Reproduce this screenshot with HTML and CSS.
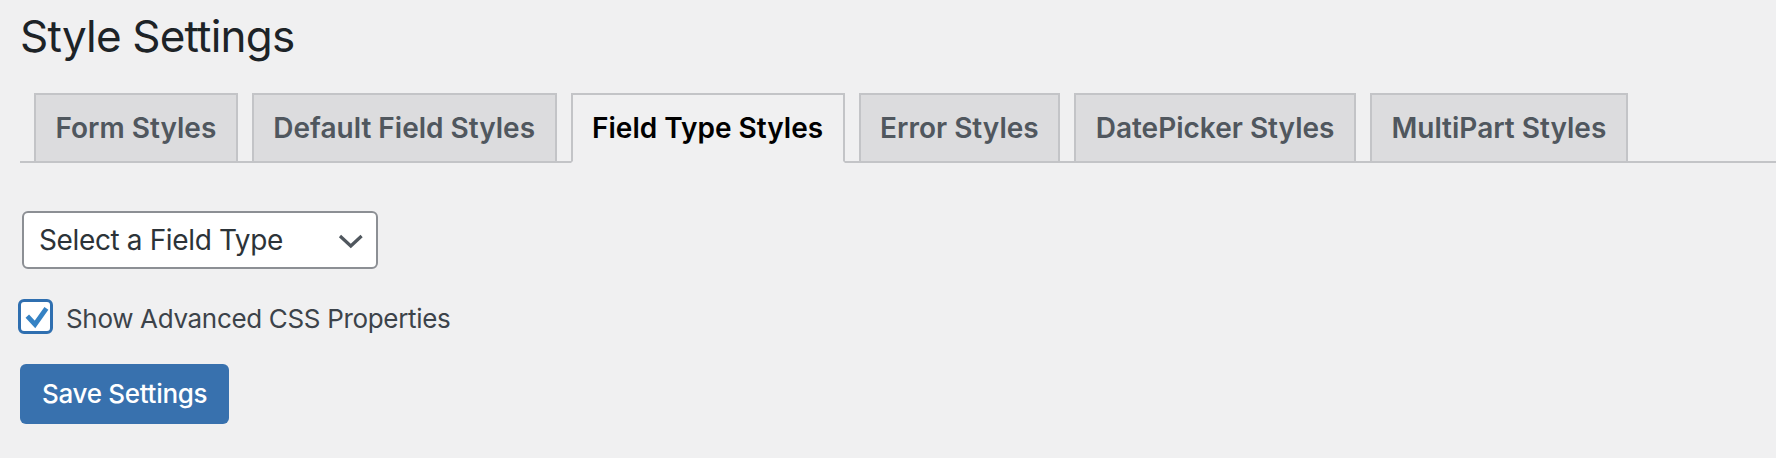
FILE: index.html
```html
<!DOCTYPE html>
<html lang="en">
<head>
<meta charset="utf-8">
<title>Style Settings</title>
<link rel="stylesheet" href="styles.css">
</head>
<body>
<div class="wrap">
  <h1 class="page-title">Style Settings</h1>
  <nav class="nav-tab-wrapper">
    <a class="nav-tab" href="#">Form Styles</a>
    <a class="nav-tab" href="#">Default Field Styles</a>
    <a class="nav-tab nav-tab-active" href="#">Field Type Styles</a>
    <a class="nav-tab" href="#">Error Styles</a>
    <a class="nav-tab" href="#">DatePicker Styles</a>
    <a class="nav-tab" href="#">MultiPart Styles</a>
  </nav>
  <form class="settings-form">
    <div class="select-wrap">
      <select class="field-select">
        <option>Select a Field Type</option>
      </select>
      <svg class="chevron" width="26" height="15" viewBox="0 0 26 15" aria-hidden="true">
        <path d="M2 2 L12.8 12 L23.6 2" fill="none" stroke="#50575e" stroke-width="3.2" stroke-linejoin="miter"/>
      </svg>
    </div>
    <label class="adv-toggle">
      <span class="checkbox">
        <svg width="29" height="29" viewBox="0 0 29 29" aria-hidden="true">
          <path d="M6.3 14.2 L14 22.4 L25.4 6.4" fill="none" stroke="#3582c4" stroke-width="4.8" stroke-linejoin="miter"/>
        </svg>
      </span>
      <span class="label-text">Show Advanced CSS Properties</span>
    </label>
    <button type="button" class="button-primary">Save Settings</button>
  </form>
</div>
</body>
</html>
```
FILE: styles.css
```css
html, body {
  margin: 0;
  padding: 0;
  background: #f0f0f1;
}

body {
  font-family: Inter, "Liberation Sans", sans-serif;
  color: #3c434a;
}

.wrap {
  padding-left: 20px;
}

.page-title {
  margin: 0;
  padding-top: 6px;
  font-size: 44px;
  line-height: 60px;
  font-weight: 400;
  letter-spacing: -0.8px;
  color: #1d2327;
}

.nav-tab-wrapper {
  margin-top: 27px;
  display: flex;
  align-items: flex-end;
  border-bottom: 2px solid #c3c4c7;
}

.nav-tab {
  display: block;
  margin-left: 14px;
  margin-bottom: -2px;
  padding: 10px 19.5px;
  border: 2px solid #c3c4c7;
  background: #dcdcde;
  color: #50575e;
  font-size: 28px;
  line-height: 46px;
  font-weight: 600;
  text-decoration: none;
  white-space: nowrap;
}

.nav-tab-active {
  background: #f0f0f1;
  color: #000;
  border-bottom-color: #f0f0f1;
}

.settings-form {
  padding-top: 48px;
  display: flex;
  flex-direction: column;
  align-items: flex-start;
}

.select-wrap {
  position: relative;
  margin-left: 2px;
}

.field-select {
  display: block;
  box-sizing: border-box;
  width: 356px;
  height: 58px;
  margin: 0;
  padding: 0 40px 0 15px;
  border: 2px solid #8c8f94;
  border-radius: 6px;
  background: #fff;
  color: #2c3338;
  font-family: Inter, "Liberation Sans", sans-serif;
  font-size: 28px;
  letter-spacing: -0.37px;
  -webkit-appearance: none;
  appearance: none;
  outline: none;
}

.chevron {
  position: absolute;
  left: 316px;
  top: 23px;
  pointer-events: none;
}

.adv-toggle {
  margin-top: 30px;
  margin-left: -2px;
  display: flex;
  align-items: center;
  height: 35px;
}

.checkbox {
  box-sizing: border-box;
  width: 35px;
  height: 35px;
  border: 3px solid #2f6fb0;
  border-radius: 6px;
  background: #fff;
  display: block;
}

.checkbox svg {
  display: block;
}

.label-text {
  margin-left: 13px;
  padding-top: 3px;
  font-size: 26px;
  letter-spacing: -0.33px;
  color: #3c434a;
}

.button-primary {
  margin-top: 30px;
  height: 60px;
  padding: 0 22px;
  border: 0;
  border-radius: 6px;
  background: #3871ae;
  color: #fff;
  font-family: Inter, "Liberation Sans", sans-serif;
  font-size: 26px;
  font-weight: 500;
  letter-spacing: -0.3px;
  line-height: 60px;
  cursor: pointer;
}
```
